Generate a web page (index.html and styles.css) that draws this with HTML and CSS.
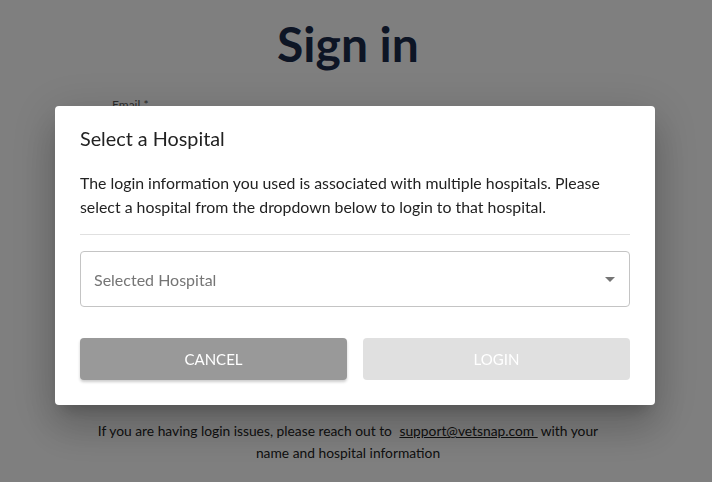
FILE: index.html
```html
<!DOCTYPE html>
<html lang="en">
<head>
<meta charset="utf-8">
<title>Sign in</title>
<link rel="stylesheet" href="styles.css">
</head>
<body>
<main class="signin">
  <h1 class="signin-title">Sign in</h1>
  <form class="signin-form">
    <label class="field-label">Email *</label>
    <div class="field-input"></div>
    <label class="field-label">Password *</label>
    <div class="field-input"></div>
    <div class="signin-btn">SIGN IN</div>
  </form>
  <p class="help">If you are having login issues, please reach out to <a class="help-link" href="#">support@vetsnap.com </a> with your name and hospital information</p>
</main>

<div class="overlay">
  <div class="dialog">
    <h2 class="dialog-title">Select a Hospital</h2>
    <p class="dialog-text">The login information you used is associated with multiple hospitals. Please select a hospital from the dropdown below to login to that hospital.</p>
    <hr class="divider">
    <div class="select">
      <span class="select-placeholder">Selected Hospital</span>
      <svg class="select-arrow" width="10" height="5" viewBox="0 0 10 5"><path d="M0 0h10L5 5z" fill="#757575"/></svg>
    </div>
    <div class="actions">
      <button class="btn btn-cancel">CANCEL</button>
      <button class="btn btn-login">LOGIN</button>
    </div>
  </div>
</div>
</body>
</html>
```
FILE: styles.css
```css
html, body {
  margin: 0;
  padding: 0;
  height: 100%;
  background: #fff;
  font-family: Lato, "Open Sans", sans-serif;
}

.signin {
  display: flex;
  flex-direction: column;
  align-items: center;
  padding-right: 16px;
}

.signin-title {
  margin: 15px 0 0;
  font-size: 48px;
  font-weight: 700;
  line-height: 58px;
  color: #1b2a4a;
}

.signin-form {
  width: 472px;
  margin-top: 25px;
  display: flex;
  flex-direction: column;
}

.field-label {
  font-size: 12px;
  line-height: 14px;
  color: #555;
}

.field-input {
  height: 48px;
  border-bottom: 1px solid #999;
  margin-bottom: 24px;
}

.signin-btn {
  height: 40px;
  margin-top: 14px;
  background: #1b2a4a;
  color: #fff;
  display: flex;
  align-items: center;
  justify-content: center;
  border-radius: 4px;
}

.help {
  width: 520px;
  margin: 94px 0 0;
  text-align: center;
  font-size: 13.8px;
  line-height: 22px;
  color: #222;
}

.help-link {
  color: #222;
  margin: 0 3px 0 4px;
}

.overlay {
  position: fixed;
  inset: 0;
  background: rgba(0, 0, 0, 0.5);
  display: flex;
  justify-content: center;
  align-items: flex-start;
  padding-top: 106px;
  padding-right: 2px;
}

.dialog {
  width: 600px;
  box-sizing: border-box;
  padding: 17px 25px 25px;
  background: #fff;
  border-radius: 4px;
  box-shadow: 0 11px 15px -7px rgba(0,0,0,.2), 0 24px 38px 3px rgba(0,0,0,.14), 0 9px 46px 8px rgba(0,0,0,.12);
}

.dialog-title {
  margin: 0;
  font-size: 19.8px;
  font-weight: 400;
  line-height: 30px;
  color: #222;
}

.dialog-text {
  margin: 18px 0 0;
  font-size: 15.85px;
  line-height: 24px;
  color: #222;
}

.divider {
  margin: 15px 0 0;
  border: 0;
  border-top: 1px solid #e0e0e0;
}

.select {
  margin-top: 16px;
  height: 56px;
  box-sizing: border-box;
  border: 1px solid #c4c4c4;
  border-radius: 4px;
  display: flex;
  align-items: center;
  justify-content: space-between;
  padding: 0 14px 0 13px;
}

.select-placeholder {
  font-size: 16px;
  color: #757575;
}

.select-arrow {
  display: block;
}

.actions {
  margin-top: 31px;
  display: flex;
  gap: 16px;
}

.btn {
  flex: 1;
  height: 42px;
  border: 0;
  border-radius: 4px;
  font-family: Lato, sans-serif;
  font-size: 15px;
  color: #fff;
}

.btn-cancel {
  background: #999;
  box-shadow: 0 2px 3px rgba(0,0,0,.2);
}

.btn-login {
  background: #e0e0e0;
}
```
